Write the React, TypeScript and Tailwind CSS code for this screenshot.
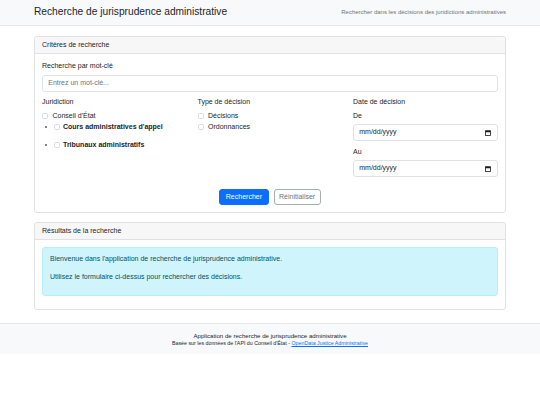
import React from 'react';

function Checkbox() {
  return <span className="inline-block w-[6px] h-[6px] shrink-0 rounded-[1.5px] border border-[#d6dadf] bg-white" />;
}

function CheckRow({ label }: { label: string }) {
  return (
    <div className="flex h-[11px] items-center">
      <Checkbox />
      <span className="ml-[4.5px]">{label}</span>
    </div>
  );
}

function BulletRow({ label, className = '' }: { label: string; className?: string }) {
  return (
    <li className={`flex h-[11px] items-center ${className}`}>
      <span className="flex w-[12px] shrink-0">
        <span className="ml-[3px] inline-block h-[2px] w-[2px] rounded-full bg-[#555b61]" />
      </span>
      <Checkbox />
      <span className="ml-[3px] font-bold">{label}</span>
    </li>
  );
}

function DateInput() {
  return (
    <div className="flex h-[16.5px] items-center justify-between rounded-[3px] border border-[#dee2e6] bg-white px-[5.25px]">
      <span className="text-[#212529]">mm/dd/yyyy</span>
      <svg width="6" height="6" viewBox="0 0 12 12" className="mr-[1px]">
        <rect x="1" y="1.5" width="10" height="9.5" fill="none" stroke="#1a1a1a" strokeWidth="1.6" />
        <rect x="1" y="1.5" width="10" height="3" fill="#1a1a1a" />
      </svg>
    </div>
  );
}

function Card({ title, children, bodyClass }: { title: string; children: React.ReactNode; bodyClass: string }) {
  return (
    <div className="rounded-[3px] border border-[#dfe1e4] bg-white">
      <div className="flex h-[17px] items-center rounded-t-[3px] border-b border-[#dfe1e4] bg-[#f7f7f7] px-[7px]">
        {title}
      </div>
      <div className={bodyClass}>{children}</div>
    </div>
  );
}

export default function App() {
  return (
    <div className="min-h-screen bg-white text-[7px] leading-[1.5] text-[#212529] font-['Liberation_Sans',Arial,sans-serif]">
      <header className="border-b border-[#e5e7ea] bg-[#f8f9fa]">
        <div className="mx-auto flex h-[25px] w-[472px] items-center justify-between">
          <h1 className="text-[10.2px] leading-[1.2] text-[#212529]">Recherche de jurisprudence administrative</h1>
          <span className="text-[6px] text-[#6c757d]">Rechercher dans les décisions des juridictions administratives</span>
        </div>
      </header>

      <main className="mx-auto w-[472px] pt-[10px]">
        <Card title="Critères de recherche" bodyClass="px-[7px] pt-[6.5px] pb-[7px]">
          <div className="mb-[3.5px] h-[10.5px]">Recherche par mot-clé</div>
          <div className="mb-[5.25px] flex h-[17px] items-center rounded-[3px] border border-[#dee2e6] px-[5.25px] text-[#6c757d]">
            Entrez un mot-clé...
          </div>

          <div className="grid grid-cols-3 items-start gap-x-[10.5px]">
            <div>
              <div className="mb-[3.5px]">Juridiction</div>
              <CheckRow label="Conseil d'État" />
              <ul>
                <BulletRow label="Cours administratives d'appel" className="mb-[6.5px]" />
                <BulletRow label="Tribunaux administratifs" />
              </ul>
            </div>
            <div>
              <div className="mb-[3.5px]">Type de décision</div>
              <CheckRow label="Décisions" />
              <CheckRow label="Ordonnances" />
            </div>
            <div>
              <div className="mb-[3.5px]">Date de décision</div>
              <div className="mb-[3px]">De</div>
              <div className="mb-[6px]">
                <DateInput />
              </div>
              <div className="mb-[3px]">Au</div>
              <DateInput />
            </div>
          </div>

          <div className="mt-[12px] flex justify-center gap-[5px]">
            <button className="h-[16.5px] rounded-[3px] border border-[#0d6efd] bg-[#0d6efd] px-[5.5px] text-white">
              Rechercher
            </button>
            <button className="h-[16.5px] rounded-[3px] border border-[#a8adb3] bg-white px-[4.5px] text-[#6c757d]">
              Réinitialiser
            </button>
          </div>
        </Card>

        <div className="mt-[9px]">
          <Card title="Résultats de la recherche" bodyClass="px-[7px] pt-[7px] pb-[7px]">
            <div className="mb-[6px] rounded-[3px] border border-[#b6effb] bg-[#cff4fc] px-[7px] pt-[6px] pb-[6px] text-[#055160]">
              <p className="mb-[7px]">Bienvenue dans l'application de recherche de jurisprudence administrative.</p>
              <p className="mb-[7px]">Utilisez le formulaire ci-dessus pour rechercher des décisions.</p>
            </div>
          </Card>
        </div>
      </main>

      <footer className="mt-[12.5px] border-t border-[#e5e7ea] bg-[#f8f9fa] pt-[7px] pb-[6.5px] text-center">
        <p className="text-[6.1px]">Application de recherche de jurisprudence administrative</p>
        <p className="text-[5.3px]">
          Basée sur les données de l'API du Conseil d'État -{' '}
          <a href="#" className="text-[#0d6efd] underline">
            OpenData Justice Administrative
          </a>
        </p>
      </footer>
    </div>
  );
}
